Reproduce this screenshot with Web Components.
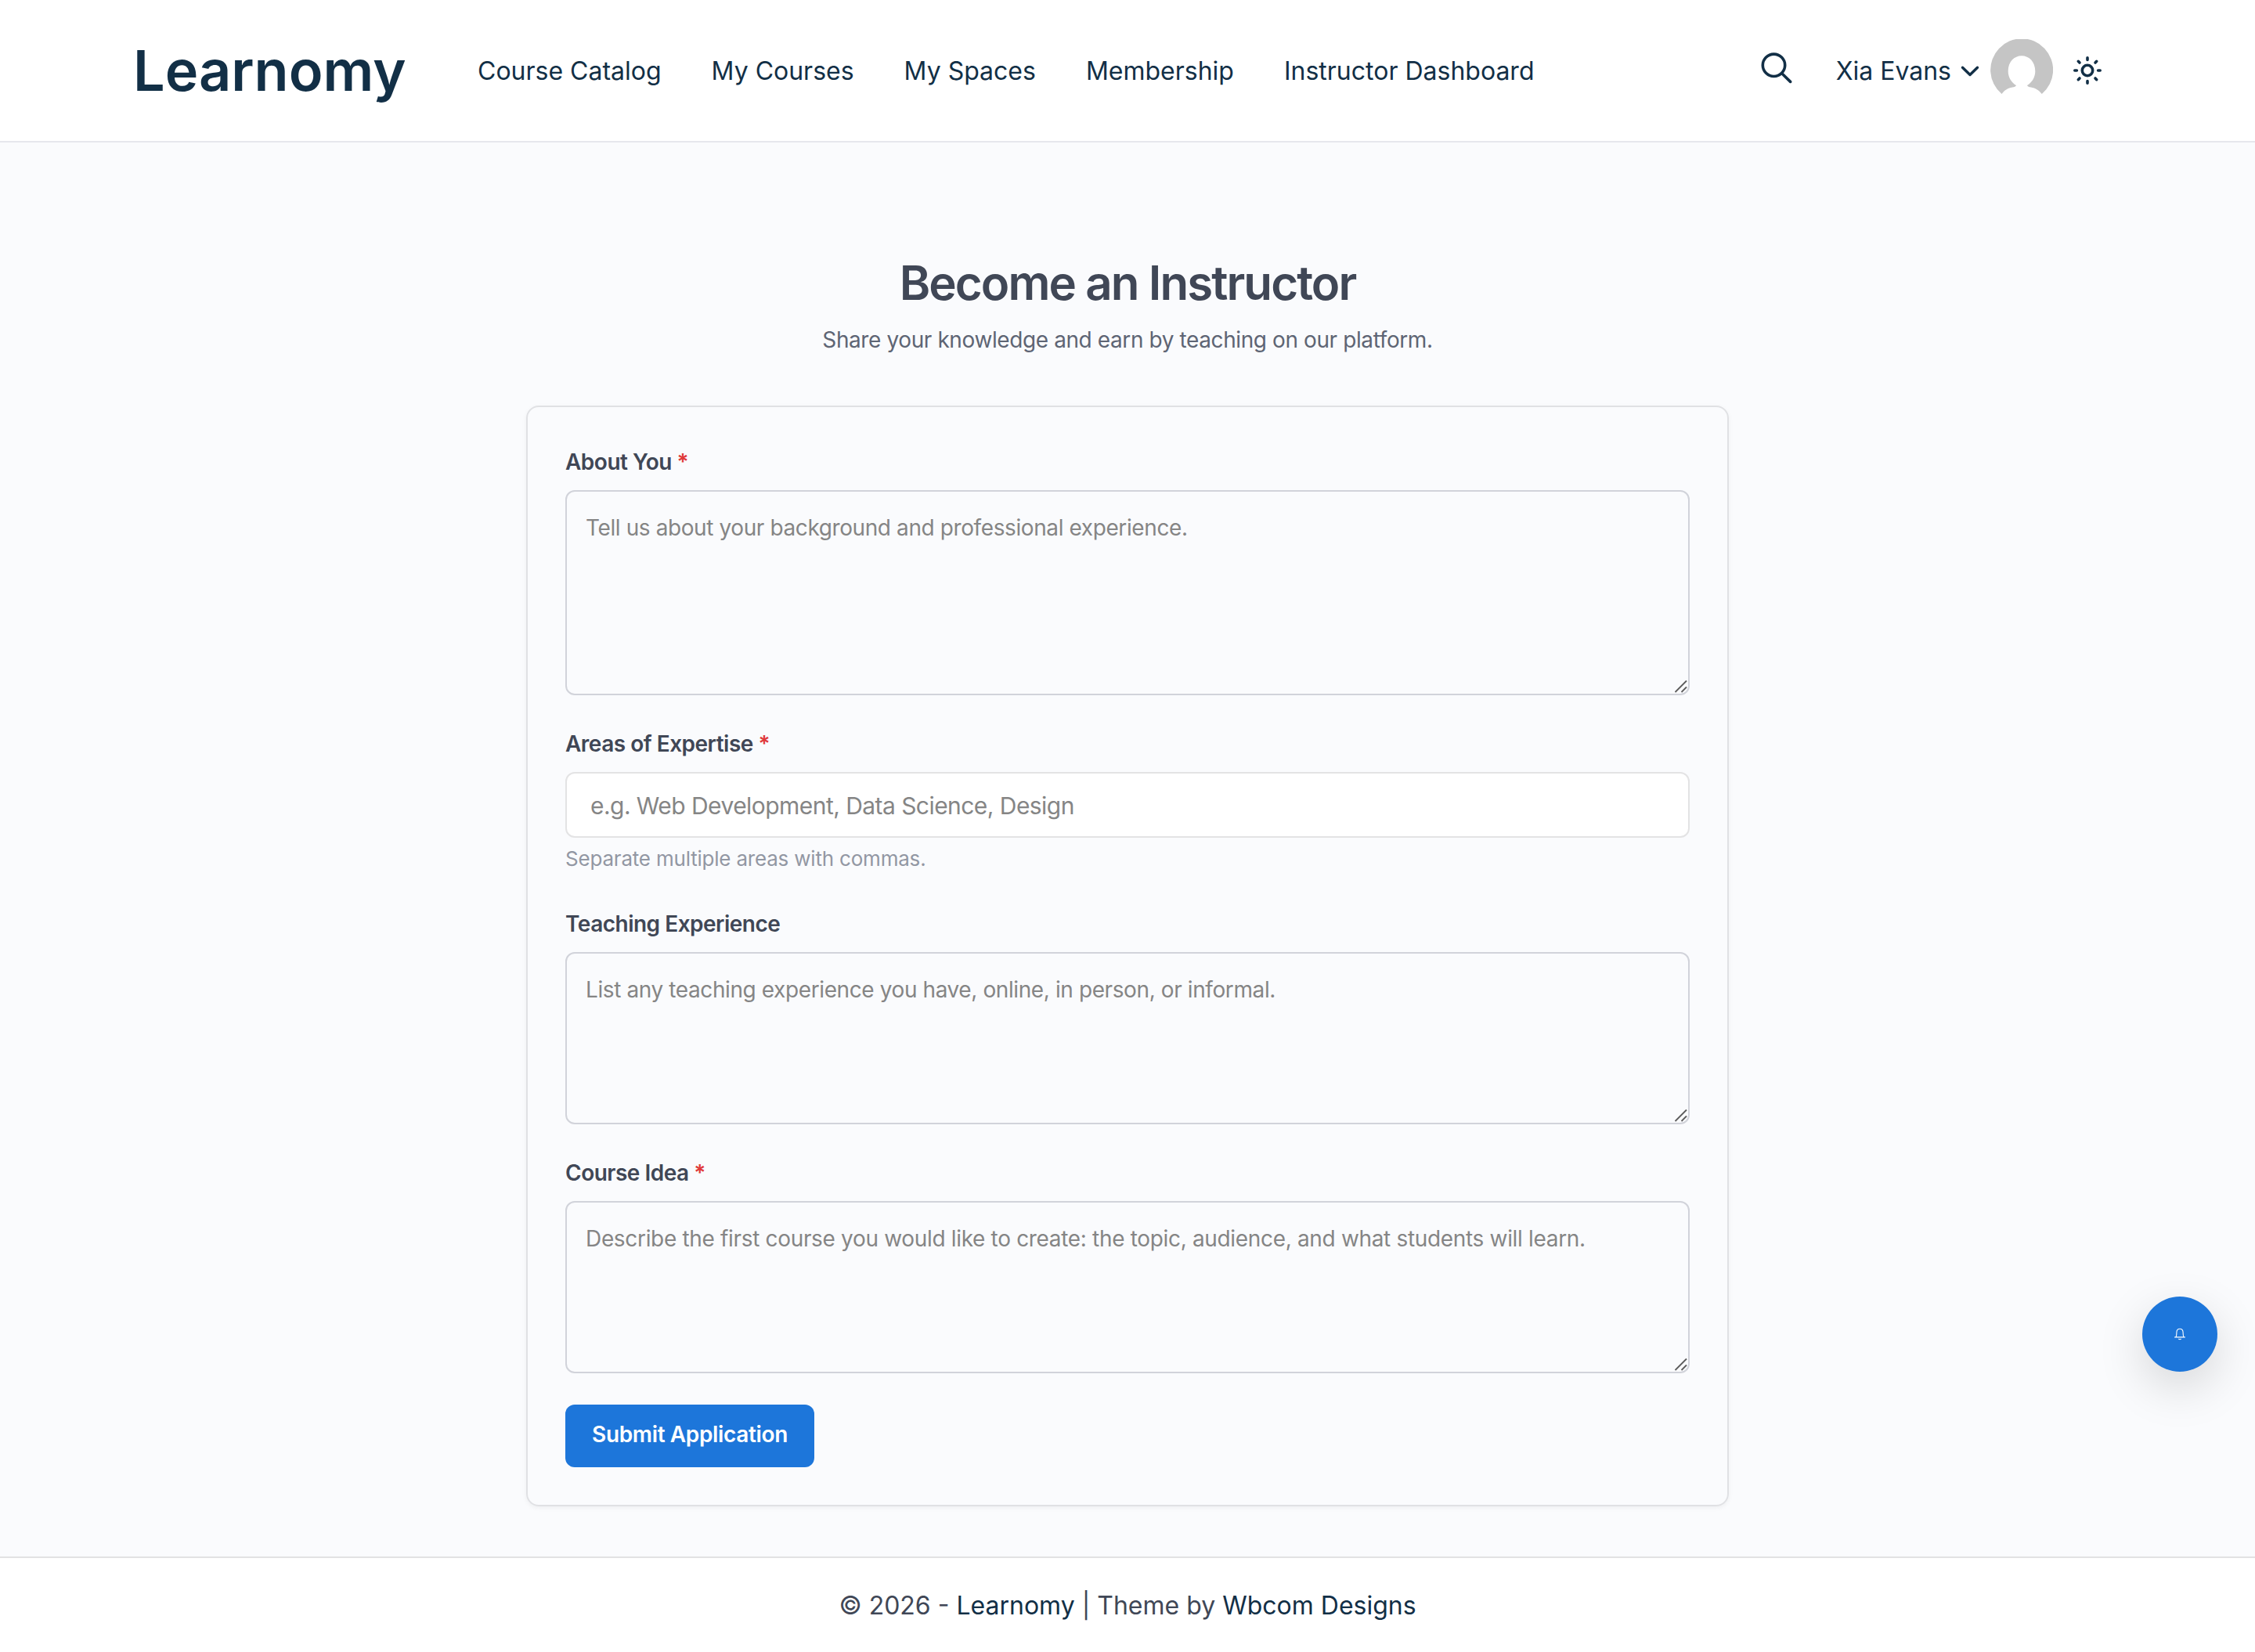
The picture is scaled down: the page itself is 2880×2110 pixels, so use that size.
<!DOCTYPE html>
<html lang="en">
<head>
<meta charset="utf-8">
<title>Become an Instructor - Learnomy</title>
<style>
    html, body {
        margin: 0;
        height: 100%;
    }
    body {
        --ink: #122f46;
        --text: #404756;
        --blue: #1d76da;
        font-family: Inter, "Liberation Sans", sans-serif;
        font-size: 32px;
        color: var(--text);
        background: #fafbfd;
        display: flex;
        flex-direction: column;
        min-height: 2110px;
    }
    main {
        flex: 1;
    }
</style>
</head>
<body>
<site-header brand="Learnomy" user="Xia Evans">
    <nav-link>Course Catalog</nav-link>
    <nav-link>My Courses</nav-link>
    <nav-link>My Spaces</nav-link>
    <nav-link>Membership</nav-link>
    <nav-link>Instructor Dashboard</nav-link>
</site-header>

<main>
    <page-intro>
        <span slot="title">Become an Instructor</span>
        Share your knowledge and earn by teaching on our platform.
    </page-intro>
    <form-card>
        <form-field label="About You" required type="textarea" height="262"
            placeholder="Tell us about your background and professional experience."></form-field>
        <form-field label="Areas of Expertise" required type="text" height="84"
            placeholder="e.g. Web Development, Data Science, Design">Separate multiple areas with commas.</form-field>
        <form-field label="Teaching Experience" type="textarea" height="220"
            placeholder="List any teaching experience you have, online, in person, or informal."></form-field>
        <form-field label="Course Idea" required type="textarea" height="220" style="--tracking: -0.33px"
            placeholder="Describe the first course you would like to create: the topic, audience, and what students will learn."></form-field>
        <submit-button>Submit Application</submit-button>
    </form-card>
</main>

<site-footer></site-footer>
<notify-button></notify-button>

<script>
class NavLink extends HTMLElement {
    constructor() {
        super();
        this.attachShadow({ mode: 'open' });
        this.shadowRoot.innerHTML = `
            <style>
                :host { display: block; }
                a { color: var(--ink); text-decoration: none; white-space: nowrap; }
            </style>
            <a href="#"><slot></slot></a>
        `;
    }
}

class SiteHeader extends HTMLElement {
    constructor() {
        super();
        this.attachShadow({ mode: 'open' });
        this.shadowRoot.innerHTML = `
            <style>
                :host {
                    display: flex;
                    align-items: center;
                    box-sizing: border-box;
                    height: 182px;
                    padding: 0 194px 0 170px;
                    background: #fff;
                    border-bottom: 2px solid #e6e7ed;
                    color: var(--ink);
                    line-height: 40px;
                }
                .brand {
                    font-size: 72px;
                    font-weight: 600;
                    line-height: 90px;
                    width: 440px;
                }
                nav { display: flex; gap: 64px; flex: 1; padding-top: 2px; }
                .tools { display: flex; align-items: center; }
                .user { display: flex; align-items: center; margin-left: 54px; }
                .name { padding-top: 2px; }
                svg { display: block; fill: none; stroke: currentColor; stroke-linecap: round; stroke-linejoin: round; }
                .search { margin-bottom: 8px; }
                .chevron { margin: 2px 13px 0 11px; }
                .avatar { stroke: none; }
                .sun { margin-left: 24px; }
            </style>
            <div class="brand"></div>
            <nav><slot></slot></nav>
            <div class="tools">
                <svg class="search" width="44" height="44" viewBox="0 0 44 44" stroke-width="3.6">
                    <circle cx="18.5" cy="19.3" r="14.2"/><path d="M29 30l10.6 10.4"/>
                </svg>
                <div class="user">
                    <span class="name"></span>
                    <svg class="chevron" width="26" height="16" viewBox="0 0 26 16" stroke-width="3.4">
                        <path d="M3.5 3.2l9.5 9.3 9.5-9.3"/>
                    </svg>
                    <svg class="avatar" width="80" height="80" viewBox="0 0 80 80">
                        <path fill="#c5c5c5" d="M14.5 70A40 40 0 1 1 65.8 70C61.500 65 57.500 62.500 52 61.600C49.500 61.200 47.500 60.500 47 59C52.500 56 57.300 49 57.300 41C57.300 29 49.500 21.300 40 21.300S22.700 29 22.700 41C22.700 49 27.500 56 33 59C32.500 60.500 30.500 61.200 28 61.600C22.500 62.500 18.500 65 14.500 70Z"/>
                    </svg>
                </div>
                <svg class="sun" width="40" height="40" viewBox="-20 -20 40 40" stroke-width="3.6">
                    <circle r="6.7"/>
                    <path d="M0-16.200v2.600M0 13.600v2.600M-16.200 0h2.600M13.600 0h2.600M-11.700-11.700l1.700 1.700M10 10l1.700 1.700M-11.700 11.700l1.700-1.700M10-10l1.700-1.700"/>
                </svg>
            </div>
        `;
        this.shadowRoot.querySelector('.brand').textContent = this.getAttribute('brand');
        this.shadowRoot.querySelector('.name').textContent = this.getAttribute('user');
    }
}

class PageIntro extends HTMLElement {
    constructor() {
        super();
        this.attachShadow({ mode: 'open' });
        this.shadowRoot.innerHTML = `
            <style>
                :host { display: block; text-align: center; padding-top: 142px; height: 194px; }
                h1 { margin: 0; font-size: 60px; font-weight: 600; line-height: 74px; letter-spacing: -1.93px; }
                p { margin: 13px 0 0; font-size: 28px; line-height: 46px; letter-spacing: -0.4px; color: #5e6574; }
            </style>
            <h1><slot name="title"></slot></h1>
            <p><slot></slot></p>
        `;
    }
}

class FormCard extends HTMLElement {
    constructor() {
        super();
        this.attachShadow({ mode: 'open' });
        this.shadowRoot.innerHTML = `
            <style>
                :host {
                    display: flex;
                    flex-direction: column;
                    align-items: stretch;
                    gap: 40px;
                    box-sizing: border-box;
                    width: 1536px;
                    margin: 0 auto;
                    padding: 48px;
                    border: 2px solid #e0e1e4;
                    border-radius: 16px;
                    box-shadow: 0 2px 6px rgba(0, 0, 0, 0.05);
                }
            </style>
            <slot></slot>
        `;
    }
}

class FormField extends HTMLElement {
    constructor() {
        super();
        this.attachShadow({ mode: 'open' });
        const multiline = this.getAttribute('type') === 'textarea';
        this.shadowRoot.innerHTML = `
            <style>
                :host { display: block; font-size: 28px; }
                label { display: block; font-weight: 600; line-height: 44px; margin-bottom: 14px; letter-spacing: -0.5px; }
                .star { color: #e03a3a; }
                .box { position: relative; display: flex; }
                textarea, input {
                    box-sizing: border-box;
                    width: 100%;
                    margin: 0;
                    font-family: inherit;
                    border-radius: 12px;
                    outline: none;
                }
                textarea {
                    resize: none;
                    padding: 23px 24px;
                    font-size: 28px;
                    line-height: 46px;
                    letter-spacing: var(--tracking, -0.4px);
                    border: 2px solid #d1d3da;
                    background: transparent;
                }
                input {
                    padding: 2px 30px 0;
                    font-size: 30px;
                    letter-spacing: -0.55px;
                    border: 2px solid #e3e3e4;
                    background: #fff;
                }
                ::placeholder { color: #858585; opacity: 1; }
                .grip { position: absolute; right: 2px; bottom: 2px; }
                .hint { margin: 7px 0 1px; font-size: 26px; line-height: 40px; letter-spacing: -0.2px; color: #9297a3; }
            </style>
            <label><span class="name"></span></label>
            <div class="box">
                ${multiline ? `
                    <textarea></textarea>
                    <svg class="grip" width="18" height="18" viewBox="0 0 18 18" stroke="#5c5c5c" stroke-width="1.8">
                        <path d="M1.500 16L16 1.500M9.500 16L16 9.500"/>
                    </svg>
                ` : '<input type="text">'}
            </div>
            ${this.textContent.trim() ? '<div class="hint"><slot></slot></div>' : ''}
        `;

        this.shadowRoot.querySelector('.name').textContent = this.getAttribute('label');
        if (this.hasAttribute('required')) {
            const star = document.createElement('span');
            star.className = 'star';
            star.textContent = '*';
            this.shadowRoot.querySelector('label').append(' ', star);
        }
        const control = this.shadowRoot.querySelector('textarea, input');
        control.placeholder = this.getAttribute('placeholder');
        control.style.height = this.getAttribute('height') + 'px';
    }
}

class SubmitButton extends HTMLElement {
    constructor() {
        super();
        this.attachShadow({ mode: 'open' });
        this.shadowRoot.innerHTML = `
            <style>
                :host { display: flex; }
                button {
                    width: 318px;
                    height: 80px;
                    padding: 0 0 4px;
                    border: 0;
                    border-radius: 12px;
                    font: 600 28px/40px Inter, sans-serif;
                    letter-spacing: -0.36px;
                    color: #fff;
                    background: var(--blue);
                }
            </style>
            <button type="button"><slot></slot></button>
        `;
    }
}

class SiteFooter extends HTMLElement {
    constructor() {
        super();
        this.attachShadow({ mode: 'open' });
        this.shadowRoot.innerHTML = `
            <style>
                :host {
                    display: block;
                    box-sizing: border-box;
                    height: 122px;
                    border-top: 2px solid #e2e2e3;
                    background: #fff;
                    text-align: center;
                    line-height: 122px;
                    overflow: hidden;
                }
                a { color: var(--ink); text-decoration: none; }
            </style>
            © 2026 - <a href="#">Learnomy</a> | Theme by <a href="#">Wbcom Designs</a>
        `;
    }
}

class NotifyButton extends HTMLElement {
    constructor() {
        super();
        this.attachShadow({ mode: 'open' });
        this.shadowRoot.innerHTML = `
            <style>
                :host {
                    position: fixed;
                    right: 48px;
                    bottom: 358px;
                    width: 96px;
                    height: 96px;
                    display: flex;
                    align-items: center;
                    justify-content: center;
                    border-radius: 50%;
                    background: var(--blue);
                    box-shadow: 0 20px 60px rgba(0, 0, 0, 0.15);
                }
            </style>
            <svg width="16" height="16" viewBox="0 0 16 16" fill="none" stroke="#fff" stroke-width="1.1" stroke-linecap="round" stroke-linejoin="round">
                <path d="M1.600 11.900h12.800M3 11.700C3.900 10.500 3.800 8.500 3.900 5.800C4 3 5.500 1.300 8 1.300S12 3 12.100 5.800C12.200 8.500 12.100 10.500 13 11.700M6.600 14.300q1.400.8 2.800 0"/>
            </svg>
        `;
    }
}

customElements.define('nav-link', NavLink);
customElements.define('site-header', SiteHeader);
customElements.define('page-intro', PageIntro);
customElements.define('form-card', FormCard);
customElements.define('form-field', FormField);
customElements.define('submit-button', SubmitButton);
customElements.define('site-footer', SiteFooter);
customElements.define('notify-button', NotifyButton);
</script>
</body>
</html>
